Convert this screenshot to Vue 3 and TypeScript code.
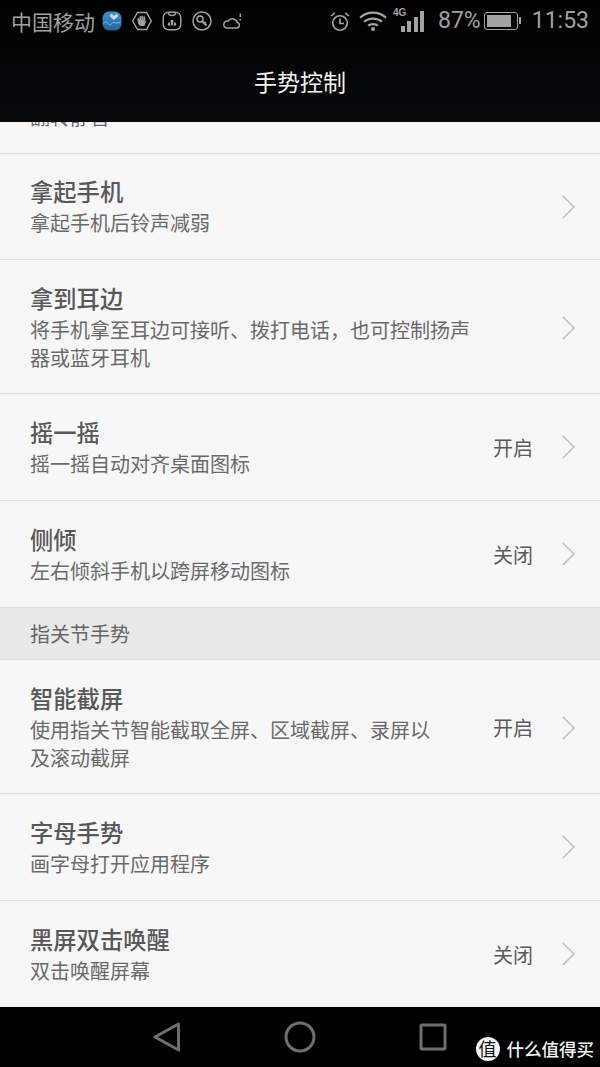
<script setup lang="ts">
interface SettingRow {
  title: string
  desc: string[]
  state?: string
}

const motionRows: SettingRow[] = [
  { title: '翻转静音', desc: ['翻转静音'] },
  { title: '拿起手机', desc: ['拿起手机后铃声减弱'] },
  { title: '拿到耳边', desc: ['将手机拿至耳边可接听、拨打电话，也可控制扬声', '器或蓝牙耳机'] },
  { title: '摇一摇', desc: ['摇一摇自动对齐桌面图标'], state: '开启' },
  { title: '侧倾', desc: ['左右倾斜手机以跨屏移动图标'], state: '关闭' }
]

const knuckleRows: SettingRow[] = [
  { title: '智能截屏', desc: ['使用指关节智能截取全屏、区域截屏、录屏以', '及滚动截屏'], state: '开启' },
  { title: '字母手势', desc: ['画字母打开应用程序'] },
  { title: '黑屏双击唤醒', desc: ['双击唤醒屏幕'], state: '关闭' }
]
</script>

<template>
  <div class="phone">
    <header class="top">
      <div class="status">
        <div class="status-left">
          <span class="carrier">中国移动</span>
          <svg class="ic-health" viewBox="0 0 20 20">
            <defs>
              <linearGradient id="healthFill" x1="0" y1="0" x2="0" y2="1">
                <stop offset="0" stop-color="#3f93cc" />
                <stop offset="1" stop-color="#23669c" />
              </linearGradient>
            </defs>
            <rect x="0.5" y="0.5" width="19" height="19" rx="6.500" fill="url(#healthFill)" />
            <path d="M12 9 8.300 5.700c-1.500-1.500.8-3.700 2.200-2.200l1.500 1.300 1.500-1.300c1.400-1.500 3.700.7 2.200 2.200z" fill="#cfd8de" />
            <path d="M1.500 12.500c1.500-1.800 2.500-2.300 3.500-1s2 3 3.500 2 2.500-2.700 4-2 3 1 6-.5" fill="none" stroke="#9ccbe6" stroke-width="0.800" />
          </svg>
          <svg class="ic" viewBox="0 0 20 20" fill="none" stroke="#a3a3a3" stroke-width="1.400">
            <path d="M5.500 1.500h9L19.300 10l-4.800 8.500h-9L.7 10z" />
            <path d="M6.300 9.500V7.800M8.300 9.500V5.800M10.300 9.500V5.300M12.300 9.500V6" stroke-width="1.700" stroke-linecap="round" />
            <path d="M5.800 9.500c0 3 1 5.500 3.500 5.500h2.200c1.700 0 1.800-2.500 2.700-4.500.3-.8-.6-1.200-1.100-.5l-.8 1.200V9H6z" fill="#a3a3a3" stroke="none" />
          </svg>
          <svg class="ic" viewBox="0 0 20 20" fill="none" stroke="#a3a3a3" stroke-width="1.400">
            <rect x="1.200" y="1.200" width="17.600" height="17.600" rx="5.500" />
            <path d="M6.300 1.200c0 4.300 7.400 4.300 7.400 0" />
            <path d="M5.800 14.500c0-1.500.5-3 1.500-3.700l1.500 3.700zM14.200 14.500c0-1.500-.5-3-1.500-3.700l-1.500 3.700zM9.300 14.200 8.500 9.700c.5-.7 1-1 1.500-1s1 .3 1.500 1l-.8 4.500z" fill="#a3a3a3" stroke="none" />
          </svg>
          <svg class="ic" viewBox="0 0 20 20" fill="none" stroke="#a3a3a3" stroke-width="1.500">
            <circle cx="10" cy="10" r="9" />
            <circle cx="8" cy="8" r="3" />
            <path d="m10.300 10.300 4.200 4.200" stroke-width="2.200" />
            <path d="m12.500 12.500 1.500-1.500" />
          </svg>
          <svg class="ic ic-cloud" viewBox="0 0 20 20" fill="none" stroke="#a3a3a3" stroke-width="1.500">
            <path d="M4.500 17h10a2.800 2.800 0 0 0 .8-5.500A5.200 5.200 0 0 0 6 10.200 3.400 3.400 0 0 0 4.500 17z" />
            <path d="M18.300 2.500v3.500M18.300 8v1.500" />
          </svg>
        </div>
        <div class="status-right">
          <svg class="ic-alarm" viewBox="0 0 20 21" fill="none" stroke="#a3a3a3" stroke-width="1.600">
            <circle cx="10" cy="12" r="7.300" />
            <path d="M10 7.500V12.500h4M1.200 5 4.700 1.800M18.800 5l-3.500-3.200" />
          </svg>
          <svg class="ic-wifi" viewBox="0 0 28 20" fill="none" stroke="#a3a3a3" stroke-width="2.200">
            <path d="M1 6.800c7.300-6.900 18.700-6.900 26 0M5 10.800c4.800-4.300 13.200-4.300 18 0M9.200 14.700c2.700-2.200 6.900-2.200 9.600 0" />
            <circle cx="14" cy="18" r="2" fill="#a3a3a3" stroke="none" />
          </svg>
          <div class="signal">
            <span class="net">4G</span>
            <i class="b1" /><i class="b2" /><i class="b3" /><i class="b4" />
          </div>
          <span class="pct">87%</span>
          <div class="battery"><div class="charge" /></div>
          <span class="clock">11:53</span>
        </div>
      </div>
      <h1 class="title">手势控制</h1>
    </header>

    <main class="scroller">
      <div class="list">
        <div v-for="row in motionRows" :key="row.title" class="row">
          <div class="text">
            <div class="name">{{ row.title }}</div>
            <div v-for="line in row.desc" :key="line" class="desc">{{ line }}</div>
          </div>
          <span v-if="row.state" class="state">{{ row.state }}</span>
          <svg class="chevron" viewBox="0 0 13 24" fill="none" stroke="#bdbdbd" stroke-width="1.500">
            <path d="m.7.7 11.300 11.300L.7 23.300" />
          </svg>
        </div>
        <div class="section">指关节手势</div>
        <div v-for="row in knuckleRows" :key="row.title" class="row">
          <div class="text">
            <div class="name">{{ row.title }}</div>
            <div v-for="line in row.desc" :key="line" class="desc">{{ line }}</div>
          </div>
          <span v-if="row.state" class="state">{{ row.state }}</span>
          <svg class="chevron" viewBox="0 0 13 24" fill="none" stroke="#bdbdbd" stroke-width="1.500">
            <path d="m.7.7 11.300 11.300L.7 23.300" />
          </svg>
        </div>
      </div>
    </main>

    <footer class="nav">
      <svg class="nav-back" viewBox="0 0 28 30" fill="none" stroke="#6e6e6e" stroke-width="3" stroke-linejoin="round">
        <path d="M25.500 2v26L2 15z" />
      </svg>
      <svg class="nav-home" viewBox="0 0 32 32" fill="none" stroke="#6e6e6e" stroke-width="3">
        <circle cx="16" cy="16" r="14" />
      </svg>
      <svg class="nav-recent" viewBox="0 0 28 28" fill="none" stroke="#6e6e6e" stroke-width="3" stroke-linejoin="round">
        <rect x="2" y="2" width="24" height="24" rx="1" />
      </svg>
      <div class="mark">
        <span class="mark-dot">值</span>
        <span class="mark-text">什么值得买</span>
      </div>
    </footer>
  </div>
</template>

<style>
body {
  margin: 0;
  background: #000;
}
</style>

<style scoped>
.phone {
  width: 600px;
  height: 1067px;
  display: flex;
  flex-direction: column;
  overflow: hidden;
  background: #f7f7f7;
  font-family: "Noto Sans CJK SC", "Noto Sans", sans-serif;
}

.top {
  height: 122px;
  flex: none;
  background: linear-gradient(#000, #08090b);
}

.status {
  height: 42px;
  display: flex;
  justify-content: space-between;
  align-items: center;
  padding: 0 11px;
  color: #a0a0a0;
}

.status-left,
.status-right {
  display: flex;
  align-items: center;
}

.carrier {
  font-size: 21px;
  line-height: 42px;
}

.ic-health {
  width: 20px;
  height: 20px;
  margin: 0 10px 0 7px;
}

.ic {
  width: 20px;
  height: 20px;
  margin-right: 10px;
}

.ic-cloud {
  margin: 0;
}

.ic-alarm {
  width: 20px;
  height: 21px;
  margin-right: 9px;
}

.ic-wifi {
  width: 28px;
  height: 20px;
  margin-right: 14px;
}

.signal {
  position: relative;
  width: 23px;
  height: 21px;
  display: flex;
  align-items: flex-end;
  justify-content: space-between;
  margin-right: 14px;
}

.signal i {
  width: 4px;
  background: #a3a3a3;
}

.b1 { height: 6px; }
.b2 { height: 11px; }
.b3 { height: 15px; }
.b4 { height: 21px; }

.net {
  position: absolute;
  left: -8px;
  top: -3px;
  font: 700 10px/10px "Liberation Sans", sans-serif;
}

.pct,
.clock {
  font-family: Roboto, sans-serif;
  font-size: 23px;
  line-height: 42px;
}

.battery {
  position: relative;
  width: 34px;
  height: 18px;
  margin: 0 14px 0 3px;
  padding: 2px;
  box-sizing: border-box;
  border: 1.500px solid #a3a3a3;
  border-radius: 3px;
}

.battery::after {
  content: "";
  position: absolute;
  right: -4.500px;
  top: 4px;
  width: 2px;
  height: 7px;
  background: #a3a3a3;
}

.charge {
  width: 87%;
  height: 100%;
  background: #a3a3a3;
}

.title {
  margin: 0;
  height: 80px;
  line-height: 78px;
  text-align: center;
  color: #f4f4f4;
  font-size: 23px;
  font-weight: 400;
}

.scroller {
  flex: 1;
  min-height: 0;
  overflow: hidden;
}

.list {
  margin-top: -75px;
}

.row {
  height: 104px;
  box-sizing: content-box;
  display: flex;
  align-items: center;
  padding: 0 25px 2px 30px;
  border-bottom: 1px solid #dfdfdf;
}

.row:nth-child(2) {
  height: 103px;
}

/* two-line descriptions sit a little lower than the single-line rows */
.row:has(.desc:nth-child(3)) {
  height: 133px;
  padding-bottom: 0;
}

.text {
  flex: 1;
  min-width: 0;
}

.name {
  margin-bottom: 1px;
  color: #585858;
  font-size: 23.300px;
  font-weight: 500;
  line-height: 34px;
}

.desc {
  color: #6a6a6a;
  font-size: 20px;
  line-height: 28px;
}

.state {
  margin: 2px 29px 0 0;
  color: #5c5c5c;
  font-size: 20px;
}

.chevron {
  width: 13px;
  height: 24px;
  flex: none;
  margin-top: 2px;
}

.section {
  height: 51px;
  padding-left: 30px;
  background: #e9e9e9;
  border-bottom: 1px solid #dfdfdf;
  color: #666;
  font-size: 20px;
  line-height: 51px;
}

.nav {
  position: relative;
  height: 60px;
  flex: none;
  display: flex;
  align-items: center;
  background: #000;
  padding-left: 153px;
}

.nav-back {
  width: 28px;
  height: 30px;
}

.nav-home {
  width: 32px;
  height: 32px;
  margin-left: 103px;
}

.nav-recent {
  width: 28px;
  height: 28px;
  margin-left: 103px;
}

.mark {
  position: absolute;
  right: 6px;
  bottom: 6px;
  display: flex;
  align-items: center;
  gap: 7px;
  color: #f2f2f2;
}

.mark-dot {
  width: 24px;
  height: 24px;
  border-radius: 50%;
  background: #f5f5f5;
  color: #111;
  font-size: 18px;
  line-height: 23px;
  text-align: center;
}

.mark-text {
  font-size: 17.500px;
  line-height: 24px;
  font-weight: 500;
}
</style>
